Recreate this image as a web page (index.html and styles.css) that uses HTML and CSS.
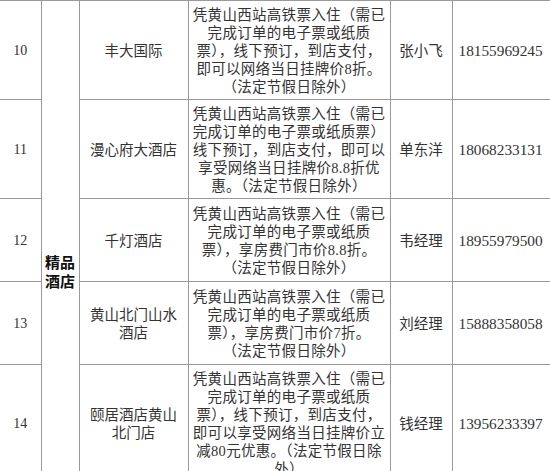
FILE: index.html
```html
<!DOCTYPE html>
<html lang="zh-CN">
<head>
<meta charset="utf-8">
<title>精品酒店</title>
<link rel="stylesheet" href="styles.css">
</head>
<body>
<table class="hotels">
  <colgroup>
    <col class="c-no">
    <col class="c-cat">
    <col class="c-name">
    <col class="c-desc">
    <col class="c-contact">
    <col class="c-phone">
  </colgroup>
  <tbody>
    <tr>
      <td class="no">10</td>
      <td class="cat" rowspan="5">精品<br>酒店</td>
      <td class="name">丰大国际</td>
      <td class="desc">凭黄山西站高铁票入住（需已<br>完成订单的电子票或纸质<br>票），线下预订，到店支付，<br>即可以网络当日挂牌价8折。<br>（法定节假日除外）</td>
      <td class="contact">张小飞</td>
      <td class="phone">18155969245</td>
    </tr>
    <tr>
      <td class="no">11</td>
      <td class="name">漫心府大酒店</td>
      <td class="desc">凭黄山西站高铁票入住（需已<br>完成订单的电子票或纸质票）<br>线下预订，到店支付，即可以<br>享受网络当日挂牌价8.8折优<br>惠。（法定节假日除外）</td>
      <td class="contact">单东洋</td>
      <td class="phone">18068233131</td>
    </tr>
    <tr class="four">
      <td class="no">12</td>
      <td class="name">千灯酒店</td>
      <td class="desc">凭黄山西站高铁票入住（需已<br>完成订单的电子票或纸质<br>票），享房费门市价8.8折。<br>（法定节假日除外）</td>
      <td class="contact">韦经理</td>
      <td class="phone">18955979500</td>
    </tr>
    <tr class="four">
      <td class="no">13</td>
      <td class="name">黄山北门山水<br>酒店</td>
      <td class="desc">凭黄山西站高铁票入住（需已<br>完成订单的电子票或纸质<br>票），享房费门市价7折。<br>（法定节假日除外）</td>
      <td class="contact">刘经理</td>
      <td class="phone">15888358058</td>
    </tr>
    <tr>
      <td class="no">14</td>
      <td class="name">颐居酒店黄山<br>北门店</td>
      <td class="desc">凭黄山西站高铁票入住（需已<br>完成订单的电子票或纸质<br>票），线下预订，到店支付，<br>即可以享受网络当日挂牌价立<br>减80元优惠。（法定节假日除<br>外）</td>
      <td class="contact">钱经理</td>
      <td class="phone">13956233397</td>
    </tr>
  </tbody>
</table>
</body>
</html>
```

FILE: styles.css
```css
html, body {
  margin: 0;
  padding: 0;
  background: #ffffff;
  overflow: hidden;
}

body {
  width: 550px;
  height: 471px;
  font-family: "Liberation Serif", "Noto Sans CJK SC", serif;
  color: #333333;
}

.hotels {
  border-collapse: collapse;
  table-layout: fixed;
  width: 552px;
}

.c-no { width: 41px; }
.c-cat { width: 38px; }
.c-name { width: 109px; }
.c-desc { width: 202px; }
.c-contact { width: 62px; }
.c-phone { width: 100px; }

.hotels td {
  border: 1px solid #9a9a9a;
  text-align: center;
  vertical-align: middle;
  padding: 5px 3px 3px;
  white-space: nowrap;
  line-height: 18px;
}

.hotels .four td {
  padding-top: 6px;
  padding-bottom: 4px;
}

.hotels td.no {
  border-left: none;
  font-size: 14px;
}

.hotels td.cat {
  vertical-align: top;
  padding: 253px 0 0;
  font-size: 15px;
  line-height: 19px;
  font-weight: bold;
  color: #111111;
}

.hotels td.name {
  font-size: 14.5px;
}

.hotels td.desc {
  font-size: 14.5px;
  letter-spacing: 0.3px;
  padding-left: 0;
  padding-right: 0;
}

.hotels td.contact {
  font-size: 14.5px;
}

.hotels td.phone {
  font-size: 15.3px;
  text-align: left;
  padding-left: 6px;
}
```
